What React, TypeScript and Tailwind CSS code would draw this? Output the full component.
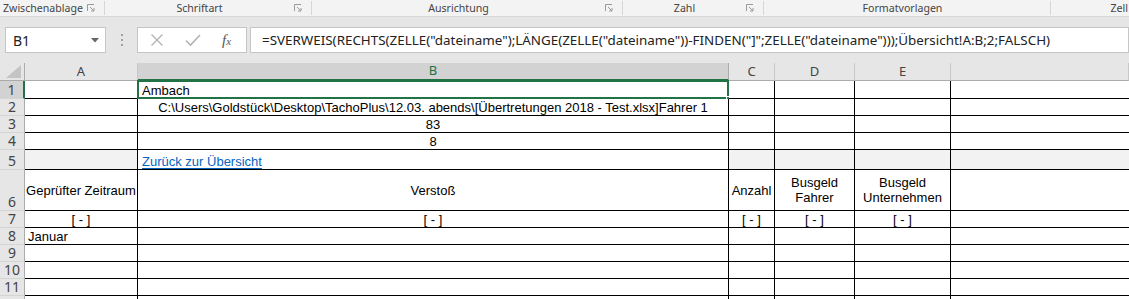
import React from "react";

const ui = "font-['Noto_Sans',sans-serif]";
const cellFont = "font-['Liberation_Sans',Arial,sans-serif] text-[13px] text-black";

function Launcher() {
  return (
    <svg width="8" height="8" viewBox="0 0 8 8" className="shrink-0">
      <path d="M0.5 7V0.5H7" fill="none" stroke="#9a9a9a" strokeWidth="1" />
      <path d="M3 3L7 7M4 7H7V4" fill="none" stroke="#9a9a9a" strokeWidth="1" />
    </svg>
  );
}

const groups = [
  { label: "Zwischenablage", w: "w-[105px]", left: true },
  { label: "Schriftart", w: "w-[207px]" },
  { label: "Ausrichtung", w: "w-[311px]" },
  { label: "Zahl", w: "w-[141px]" },
  { label: "Formatvorlagen", w: "w-[287px]", noLauncher: true },
];

const cols = ["A", "B", "C", "D", "E", ""];

const rowHeights = ["h-[18px]", "h-[17px]", "h-[17px]", "h-[17px]", "h-[20px]", "h-[41px]", "h-[17px]", "h-[17px]", "h-[17px]", "h-[17px]", "h-[17px]", "h-[17px]"];

type Cell = { text?: React.ReactNode; align?: string; v?: string };

const data: Record<number, Cell[]> = {
  1: [{}, { text: "Ambach", align: "justify-start pl-[4px]" }, {}, {}, {}, {}],
  2: [{}, { text: "C:\\Users\\Goldstück\\Desktop\\TachoPlus\\12.03. abends\\[Übertretungen 2018 - Test.xlsx]Fahrer 1" }, {}, {}, {}, {}],
  3: [{}, { text: "83" }, {}, {}, {}, {}],
  4: [{}, { text: "8" }, {}, {}, {}, {}],
  5: [
    {},
    {
      text: <span className="text-[#0563c1] underline underline-offset-2">Zurück zur Übersicht</span>,
      align: "justify-start pl-[4px]",
    },
    {},
    {},
    {},
    {},
  ],
  6: [
    { text: "Geprüfter Zeitraum", v: "items-center" },
    { text: "Verstoß", v: "items-center" },
    { text: "Anzahl", v: "items-center" },
    { text: <span className="text-center leading-[15px]">Busgeld<br />Fahrer</span>, v: "items-center" },
    { text: <span className="text-center leading-[15px]">Busgeld<br />Unternehmen</span>, v: "items-center" },
    {},
  ],
  7: [{ text: "[ - ]" }, { text: "[ - ]" }, { text: "[ - ]" }, { text: "[ - ]" }, { text: "[ - ]" }, {}],
  8: [{ text: "Januar", align: "justify-start pl-[3px]" }, {}, {}, {}, {}, {}],
};

export default function App() {
  return (
    <div className="w-[1129px] h-[299px] overflow-hidden bg-white">
      {/* ribbon group labels */}
      <div className={`flex h-[17px] bg-[#f3f3f3] border-b border-[#d6d6d6] text-[10.6px] text-[#444] ${ui}`}>
        {groups.map((g) => (
          <div key={g.label} className={`${g.w} shrink-0 flex items-center border-r border-[#d6d6d6] my-[1px] pr-[9px]`}>
            <span className={`flex-1 leading-none ${g.left ? "pl-[3px]" : "text-center"}`}>{g.label}</span>
            {!g.noLauncher && <Launcher />}
          </div>
        ))}
        <div className="flex-1 flex items-center justify-end pr-[1px] whitespace-nowrap">
          <span className="leading-none">Zell</span>
        </div>
      </div>

      {/* formula bar */}
      <div className={`flex items-center h-[46px] bg-[#e6e6e6] pl-[5px] ${ui}`}>
        <div className="w-[101px] h-[26px] bg-white border border-[#c6c6c6] flex items-center pl-[7px] pr-[6px]">
          <span className="flex-1 text-[14px] text-[#222]">B1</span>
          <svg width="8" height="5" viewBox="0 0 8 5">
            <path d="M0 0H8L4 4.5Z" fill="#666" />
          </svg>
        </div>
        <div className="w-[31px] flex flex-col items-center gap-[3px]">
          <span className="w-[2px] h-[2px] bg-[#a0a0a0]" />
          <span className="w-[2px] h-[2px] bg-[#a0a0a0]" />
          <span className="w-[2px] h-[2px] bg-[#a0a0a0]" />
        </div>
        <div className="w-[110px] h-[26px] bg-white border border-[#c6c6c6] flex items-center">
          <svg width="14" height="14" viewBox="0 0 14 14" className="ml-[12px]">
            <path d="M1.5 1.5L12.5 12.5M12.5 1.5L1.5 12.5" stroke="#b2b2b2" strokeWidth="1.3" />
          </svg>
          <svg width="16" height="14" viewBox="0 0 16 14" className="ml-[21px]">
            <path d="M1 7.5L5.5 12L15 2" fill="none" stroke="#b2b2b2" strokeWidth="1.6" />
          </svg>
          <span className="ml-[21px] font-['Liberation_Serif',serif] italic text-[15px] text-[#555] leading-none">
            f<span className="text-[11px]">x</span>
          </span>
        </div>
        <div className="flex-1 ml-[3px] h-[26px] bg-white border border-[#c6c6c6] flex items-center pl-[11px] text-[13.4px] text-[#222] whitespace-nowrap overflow-hidden">
          =SVERWEIS(RECHTS(ZELLE("dateiname");LÄNGE(ZELLE("dateiname"))-FINDEN("]";ZELLE("dateiname")));Übersicht!A:B;2;FALSCH)
        </div>
      </div>

      {/* sheet */}
      <div className="grid grid-cols-[25px_113px_591px_46px_80px_96px_1fr]">
        {/* column headers */}
        <div className="relative h-[18px] bg-[#e6e6e6] border-r border-b border-[#ababab]">
          <svg width="15" height="13" viewBox="0 0 15 13" className="absolute right-[3px] bottom-[2px]">
            <path d="M15 0V13H0Z" fill="#c4c4c4" />
          </svg>
        </div>
        {cols.map((c) => (
          <div
            key={c || "F"}
            className={`h-[18px] flex items-center justify-center text-[13px] ${ui} ${
              c === "B"
                ? "bg-[#d2d2d2] text-[#217346] border-r border-[#ababab] border-b-2 border-b-[#217346]"
                : "bg-[#e6e6e6] text-[#444] border-r border-r-[#c8c8c8] border-b border-b-[#ababab]"
            }`}
          >
            {c}
          </div>
        ))}

        {rowHeights.map((h, i) => {
          const r = i + 1;
          const row = data[r] || [{}, {}, {}, {}, {}, {}];
          return (
            <React.Fragment key={r}>
              <div
                className={`${h} flex items-end justify-center pb-[1px] text-[14px] leading-[15px] ${ui} border-b border-[#d4d4d4] ${
                  r === 1
                    ? "bg-[#d2d2d2] text-[#444] border-r-2 border-r-[#217346]"
                    : "bg-[#e6e6e6] text-[#444] border-r border-r-[#ababab]"
                }`}
              >
                {r < 12 ? r : ""}
              </div>
              {row.map((cell, ci) => {
                const gray = r === 5 && ci !== 1;
                const last = ci === 5;
                return (
                  <div
                    key={ci}
                    className={`${h} relative flex ${cell.v || "items-end"} ${cell.align || "justify-center"} ${cellFont} leading-[15px] whitespace-nowrap border-b border-black ${
                      last ? "" : "border-r"
                    } ${gray ? "bg-[#f2f2f2]" : "bg-white"}`}
                  >
                    {cell.text}
                    {r === 1 && ci === 1 && (
                      <>
                        <span className="absolute -left-[1px] -top-[1px] -right-[1px] -bottom-[1px] border-2 border-[#217346] pointer-events-none" />
                        <span className="absolute -right-[4px] -bottom-[4px] w-[6px] h-[6px] bg-[#217346] border border-white" />
                      </>
                    )}
                  </div>
                );
              })}
            </React.Fragment>
          );
        })}
      </div>
    </div>
  );
}
